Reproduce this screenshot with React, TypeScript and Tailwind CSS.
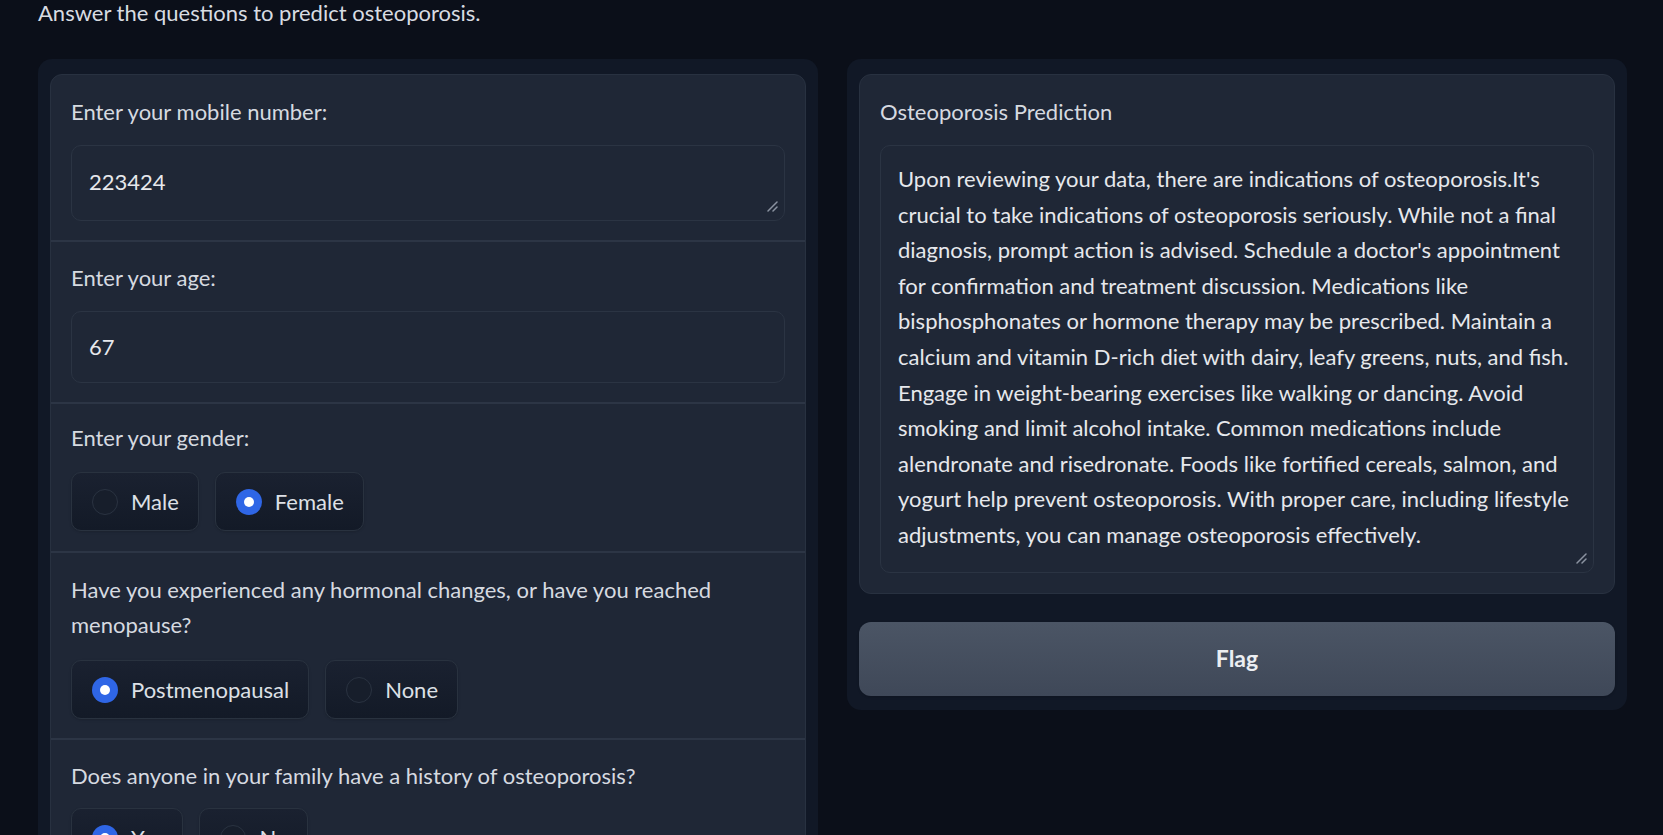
import React from "react";

function Radio({ label, checked }: { label: string; checked?: boolean }) {
  return (
    <div className="flex h-[59px] items-center gap-[13px] rounded-[10px] border border-[#29323f] bg-gradient-to-b from-[#1a2130] to-[#131a27] pl-[20px] pr-[19px] shadow-sm">
      {checked ? (
        <span className="flex h-[26px] w-[26px] items-center justify-center rounded-full bg-[#2f66e6]">
          <span className="h-[10px] w-[10px] rounded-full bg-white" />
        </span>
      ) : (
        <span className="h-[26px] w-[26px] rounded-full border border-[#2a3341] bg-[#171e2b]" />
      )}
      <span className="text-[22px] leading-none text-[#dde0e6]">{label}</span>
    </div>
  );
}

function ResizeHandle() {
  return (
    <svg className="absolute bottom-[8px] right-[6px] h-[12px] w-[12px]" viewBox="0 0 12 12">
      <path d="M11 2 L2 11 M11 7 L7 11" stroke="#8b93a1" strokeWidth="1.5" strokeLinecap="round" />
    </svg>
  );
}

const answer = [
  "Upon reviewing your data, there are indications of osteoporosis.It's",
  "crucial to take indications of osteoporosis seriously. While not a final",
  "diagnosis, prompt action is advised. Schedule a doctor's appointment",
  "for confirmation and treatment discussion. Medications like",
  "bisphosphonates or hormone therapy may be prescribed. Maintain a",
  "calcium and vitamin D-rich diet with dairy, leafy greens, nuts, and fish.",
  "Engage in weight-bearing exercises like walking or dancing. Avoid",
  "smoking and limit alcohol intake. Common medications include",
  "alendronate and risedronate. Foods like fortified cereals, salmon, and",
  "yogurt help prevent osteoporosis. With proper care, including lifestyle",
  "adjustments, you can manage osteoporosis effectively.",
];

export default function App() {
  return (
    <div className="h-screen w-full overflow-hidden bg-[#0b0f19] pl-[38px] pr-[36px] font-[Lato,sans-serif] text-[#d4d8df]">
      <div className="text-[22px] leading-[26px] text-[#d8dce2]">
        Answer the questions to predict osteoporosis.
      </div>

      <div className="mt-[33px] flex items-start gap-[29px]">
        {/* inputs */}
        <div className="flex-1 rounded-[14px] bg-[#111826] px-[12px] pt-[15px]">
          <div className="rounded-[12px] border border-[#283140] bg-[#1f2736]">
            <div className="px-[20px] pb-[19px] pt-[20px]">
              <div className="mb-[16px] text-[22px] leading-[34px] text-[#d6dae0]">Enter your mobile number:</div>
              <div className="relative flex h-[76px] items-center rounded-[10px] border border-[#2b3443] bg-[#1f2736] px-[17px] pb-[3px] text-[22px] text-[#e6e8ec]">
                223424
                <ResizeHandle />
              </div>
            </div>
            <div className="border-t-2 border-[#2c3545] px-[20px] pb-[19px] pt-[19px]">
              <div className="mb-[16px] text-[22px] leading-[34px] text-[#d6dae0]">Enter your age:</div>
              <div className="flex h-[72px] items-center rounded-[10px] border border-[#2b3443] bg-[#1f2736] px-[17px] pb-[2px] text-[22px] text-[#e6e8ec]">
                67
              </div>
            </div>
            <div className="border-t-2 border-[#2c3545] px-[20px] pb-[20px] pt-[17px]">
              <div className="mb-[17px] text-[22px] leading-[34px] text-[#d6dae0]">Enter your gender:</div>
              <div className="flex gap-[16px]">
                <Radio label="Male" />
                <Radio label="Female" checked />
              </div>
            </div>
            <div className="border-t-2 border-[#2c3545] px-[20px] pb-[19px] pt-[19px]">
              <div className="mb-[18px] text-[22px] leading-[35px] text-[#d6dae0]">
                Have you experienced any hormonal changes, or have you reached
                <br />
                menopause?
              </div>
              <div className="flex gap-[16px]">
                <Radio label="Postmenopausal" checked />
                <Radio label="None" />
              </div>
            </div>
            <div className="border-t-2 border-[#2c3545] px-[20px] pb-[20px] pt-[19px]">
              <div className="mb-[15px] text-[22px] leading-[34px] text-[#d6dae0]">
                Does anyone in your family have a history of osteoporosis?
              </div>
              <div className="flex gap-[16px]">
                <Radio label="Yes" checked />
                <Radio label="No" />
              </div>
            </div>
          </div>
        </div>

        {/* output */}
        <div className="flex-1 rounded-[14px] bg-[#111826] px-[12px] pb-[14px] pt-[15px]">
          <div className="rounded-[12px] border border-[#283140] bg-[#1f2736] px-[20px] pb-[20px] pt-[20px]">
            <div className="mb-[16px] text-[22px] leading-[34px] text-[#d6dae0]">Osteoporosis Prediction</div>
            <div className="relative rounded-[10px] border border-[#2b3443] bg-[#1f2736] pb-[19px] pl-[17px] pr-[10px] pt-[15px] text-[22px] leading-[35.6px] text-[#e6e8ec]">
              {answer.map((line) => (
                <div key={line} className="whitespace-nowrap">
                  {line}
                </div>
              ))}
              <ResizeHandle />
            </div>
          </div>
          <button className="mt-[28px] flex h-[74px] w-full items-center justify-center rounded-[12px] bg-gradient-to-b from-[#4b5565] to-[#3f4858] text-[23px] font-bold text-[#eceef2] shadow">
            Flag
          </button>
        </div>
      </div>
    </div>
  );
}
